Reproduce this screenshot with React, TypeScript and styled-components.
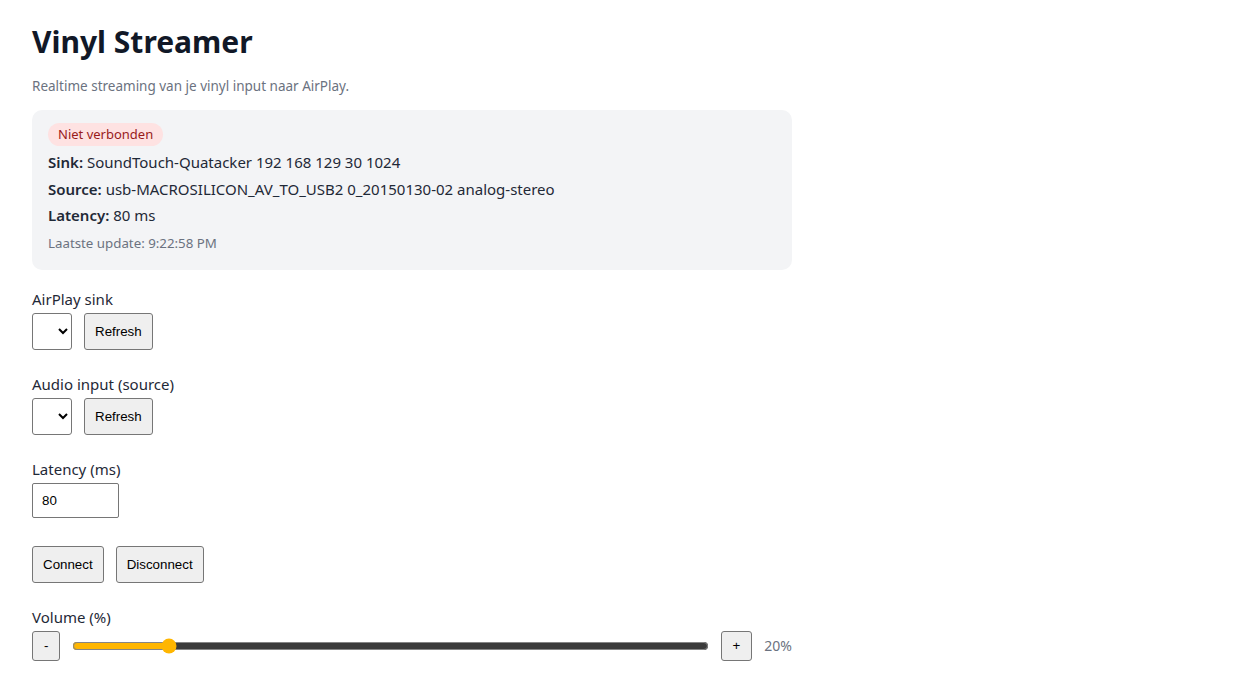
import { useState } from "react";
import styled, { createGlobalStyle } from "styled-components";

const GlobalStyle = createGlobalStyle`
  html, body {
    margin: 0;
    padding: 0;
    background: #ffffff;
  }
  body {
    font-family: "Noto Sans", "Open Sans", sans-serif;
    color: #1f2937;
  }
`;

const Page = styled.main`
  max-width: 760px;
  padding: 0 32px 32px;
`;

const Title = styled.h1`
  margin: 20px 0 0;
  font-size: 30px;
  line-height: 44px;
  font-weight: 700;
  color: #111827;
`;

const Subtitle = styled.p`
  margin: 13px 0 15px;
  font-size: 13.5px;
  line-height: 18px;
  color: #6b7280;
`;

const StatusCard = styled.section`
  background: #f3f4f6;
  border-radius: 10px;
  padding: 13px 16px 14px;
  display: flex;
  flex-direction: column;
  align-items: flex-start;
`;

const Badge = styled.span<{ $connected: boolean }>`
  display: inline-block;
  padding: 2px 10px;
  border-radius: 999px;
  font-size: 13px;
  line-height: 19px;
  background: ${(p) => (p.$connected ? "#dcfce7" : "#fee2e2")};
  color: ${(p) => (p.$connected ? "#166534" : "#991b1b")};
  margin-bottom: 3px;
`;

const InfoLine = styled.div`
  font-size: 15px;
  line-height: 26.5px;

  & b {
    font-weight: 600;
  }
`;

const Updated = styled.div`
  margin-top: 1px;
  font-size: 13.3px;
  line-height: 26px;
  color: #6b7280;
`;

const Field = styled.div<{ $gap?: number }>`
  margin-top: ${(p) => p.$gap ?? 20}px;
`;

const Label = styled.label`
  display: block;
  font-size: 15px;
  line-height: 22px;
  margin-bottom: 3px;
`;

const Row = styled.div`
  display: flex;
  align-items: center;
  gap: 12px;
`;

const Select = styled.select`
  width: 40px;
  height: 37px;
  padding: 0 4px;
  border: 1px solid #767676;
  border-radius: 3px;
  background: #fff;
  font-family: Arial, "Liberation Sans", sans-serif;
  font-size: 13.33px;
`;

const Button = styled.button<{ $small?: boolean }>`
  font-family: Arial, "Liberation Sans", sans-serif;
  font-size: 13.33px;
  line-height: 15px;
  color: #000;
  background: #efefef;
  border: 1px solid #767676;
  border-radius: 3px;
  height: ${(p) => (p.$small ? 30 : 37)}px;
  padding: ${(p) => (p.$small ? "0 11px" : "0 10px")};
  cursor: pointer;
`;

const NumberInput = styled.input`
  box-sizing: border-box;
  width: 87px;
  height: 35px;
  padding: 0 9px;
  border: 1px solid #767676;
  border-radius: 2px;
  font-family: Arial, "Liberation Sans", sans-serif;
  font-size: 13.33px;
  color: #000;
`;

const Slider = styled.input`
  flex: 1;
  margin: 0;
  accent-color: #ffb600;
`;

const Percent = styled.span`
  font-size: 14px;
  color: #6b7280;
`;

export default function App() {
  const [latency, setLatency] = useState("80");
  const [volume, setVolume] = useState(20);

  return (
    <>
      <GlobalStyle />
      <Page>
        <Title>Vinyl Streamer</Title>
        <Subtitle>Realtime streaming van je vinyl input naar AirPlay.</Subtitle>

        <StatusCard>
          <Badge $connected={false}>Niet verbonden</Badge>
          <InfoLine>
            <b>Sink:</b> SoundTouch-Quatacker 192 168 129 30 1024
          </InfoLine>
          <InfoLine>
            <b>Source:</b> usb-MACROSILICON_AV_TO_USB2 0_20150130-02 analog-stereo
          </InfoLine>
          <InfoLine>
            <b>Latency:</b> 80 ms
          </InfoLine>
          <Updated>Laatste update: 9:22:58 PM</Updated>
        </StatusCard>

        <Field $gap={18}>
          <Label>AirPlay sink</Label>
          <Row>
            <Select />
            <Button>Refresh</Button>
          </Row>
        </Field>

        <Field $gap={23}>
          <Label>Audio input (source)</Label>
          <Row>
            <Select />
            <Button>Refresh</Button>
          </Row>
        </Field>

        <Field $gap={23}>
          <Label>Latency (ms)</Label>
          <NumberInput
            type="number"
            value={latency}
            onChange={(e) => setLatency(e.target.value)}
          />
        </Field>

        <Field $gap={28}>
          <Row>
            <Button>Connect</Button>
            <Button>Disconnect</Button>
          </Row>
        </Field>

        <Field $gap={23}>
          <Label>Volume (%)</Label>
          <Row>
            <Button $small onClick={() => setVolume((v) => Math.max(0, v - 5))}>-</Button>
            <Slider
              type="range"
              min={0}
              max={140}
              value={volume}
              onChange={(e) => setVolume(Number(e.target.value))}
            />
            <Button $small onClick={() => setVolume((v) => Math.min(100, v + 5))}>+</Button>
            <Percent>{volume}%</Percent>
          </Row>
        </Field>
      </Page>
    </>
  );
}
